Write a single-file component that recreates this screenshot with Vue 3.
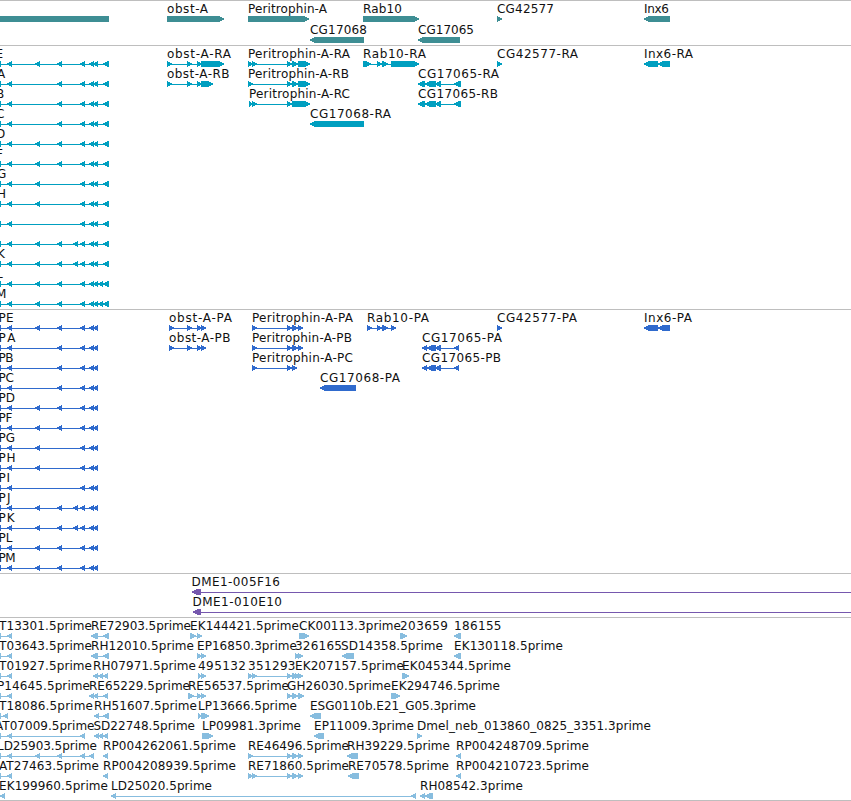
<template>
  <div class="browser">
    <section v-for="track in tracks" :key="track.id" class="track" :class="track.id">
      <svg class="canvas" width="851" :height="track.height" :viewBox="`0 0 851 ${track.height}`">
        <g
          v-for="(item, i) in track.items"
          :key="i"
          :transform="`translate(0 ${item.row * track.pitch})`"
        >
          <path class="shape" :d="shapePath(item)" />
          <text
            v-if="item.name"
            class="label"
            :x="item.x"
            y="12"
            :textLength="item.end - item.x"
            lengthAdjust="spacing"
          >{{ item.name }}</text>
        </g>
      </svg>
    </section>
  </div>
</template>

<script setup>
const TOP = 15;
const HEAD = 5;

// strand: 1 forward, -1 reverse, 0 plain bar
function feature(row, strand, name, x, end, exons) {
  return { row, strand, name, x, end, exons };
}

function exonPath([from, to], strand) {
  const bottom = TOP + 6;
  if (strand === 0 || to - from < 2) {
    return `M${from} ${TOP}H${to}V${bottom}H${from}Z`;
  }
  const head = Math.min(HEAD, to - from);
  if (strand > 0) {
    return `M${from} ${TOP}H${to - head}L${to} ${TOP + 2.5}V${TOP + 3.5}L${to - head} ${bottom}H${from}Z`;
  }
  return `M${from + head} ${TOP}H${to}V${bottom}H${from + head}L${from} ${TOP + 3.5}V${TOP + 2.5}Z`;
}

function shapePath(item) {
  const first = item.exons[0][0];
  const last = item.exons[item.exons.length - 1][1];
  const line = `M${first} ${TOP + 3}H${last}V${TOP + 4}H${first}Z`;
  return line + item.exons.map((exon) => exonPath(exon, item.strand)).join('');
}

const e0 = [0, 1];
const e7 = [7, 12];
const e35 = [35, 40];
const e57 = [57, 62];
const e73 = [73, 78];
const e80 = [80, 85];
const tail = [[89, 94], [93, 98]];

const variants = [
  [e0, e7, e35, e57, e80],
  [e0, e7, e57, e80],
  [e0, e7, e57, e80],
  [e0, e7, e57, e80],
  [e0, e7, e35, e57, e80],
  [e0, e7, e35, e57, e80],
  [e0, e7, e35, e80],
  [e0, e7, e35, e80],
  [e0, e7, e80],
  [e0, e7, e35, e57, e73, e80],
  [e0, e7, e35, e57, e73, e80],
  [e0, e7, e35, e57, e80],
  [e0, e7, e35, e57, e80],
];

const transcriptNames = [
  ['E', -4.5, 2.5], ['A', -3, 5.5], ['B', -4, 4], ['C', -4, 5], ['D', -4, 6],
  ['F', -4, 2.5], ['G', -3, 6], ['H', -3, 6], ['', 0, 0], ['', 0, 0],
  ['K', -3, 5], ['L', -4, 3], ['M', -4, 6.5],
];
const proteinNames = [
  ['PE', 13.5], ['PA', 15.5], ['PB', 13.5], ['PC', 14], ['PD', 15], ['PF', 12.5], ['PG', 15],
  ['PH', 15.5], ['PI', 10], ['PJ', 10.5], ['PK', 14.5], ['PL', 12.5], ['PM', 15.5],
];

const leftTranscripts = variants.map((exons, i) => {
  const end = i > 10 ? [[98, 103], [103, 109]] : [[103, 109]];
  const [name, x, to] = transcriptNames[i];
  return feature(i, -1, name, x, to, [...exons, ...tail, ...end]);
});
const leftProteins = variants.map((exons, i) =>
  feature(i, -1, proteinNames[i][0], -1.5, proteinNames[i][1], [...exons, ...tail])
);

const per3 = [[287, 292], [292, 298], [298, 303]];

const tracks = [
  {
    id: 'genes',
    height: 44,
    pitch: 21,
    items: [
      feature(0, 0, '', 0, 0, [[0, 109]]),
      feature(0, 1, 'obst-A', 167, 208, [[167, 224]]),
      feature(0, 1, 'Peritrophin-A', 248, 327, [[248, 309]]),
      feature(0, 1, 'Rab10', 363, 402, [[363, 419]]),
      feature(0, 1, 'CG42577', 497, 554, [[497, 502]]),
      feature(0, -1, 'Inx6', 644, 669, [[644, 670]]),
      feature(1, -1, 'CG17068', 310, 367, [[310, 364]]),
      feature(1, -1, 'CG17065', 418, 474, [[418, 460]]),
    ],
  },
  {
    id: 'transcripts',
    height: 263,
    pitch: 20,
    items: [
      ...leftTranscripts,
      feature(0, 1, 'obst-A-RA', 167, 231, [[167, 172], [187, 192], [197, 202], [201, 224]]),
      feature(1, 1, 'obst-A-RB', 167, 229.5, [[167, 172], [187, 192], [197, 202], [201, 213]]),
      feature(0, 1, 'Peritrophin-A-RA', 248, 350, [[248, 253], [252, 257], [287, 292], [292, 298], [298, 310]]),
      feature(1, 1, 'Peritrophin-A-RB', 248, 349, [[248, 253], [287, 292], [292, 298], [298, 310]]),
      feature(2, 1, 'Peritrophin-A-RC', 249, 350, [[249, 253], [252, 257], [287, 292], [292, 310]]),
      feature(3, -1, 'CG17068-RA', 310, 391, [[310, 364]]),
      feature(0, 1, 'Rab10-RA', 363, 426, [[363, 371], [377, 382], [382, 388], [391, 419]]),
      feature(1, -1, 'CG17065-RA', 418, 499, [[418, 425], [425, 436], [435, 441], [454, 461]]),
      feature(2, -1, 'CG17065-RB', 418, 498, [[418, 425], [425, 436], [435, 441], [454, 461]]),
      feature(0, 1, 'CG42577-RA', 497, 578, [[497, 502]]),
      feature(0, -1, 'Inx6-RA', 644, 693, [[644, 658], [658, 670]]),
    ],
  },
  {
    id: 'proteins',
    height: 263,
    pitch: 20,
    items: [
      ...leftProteins,
      feature(0, 1, 'obst-A-PA', 169, 232, [[169, 174], [187, 192], [197, 202], [201, 206]]),
      feature(1, 1, 'obst-A-PB', 169, 230.5, [[169, 174], [187, 192], [197, 202], [201, 206]]),
      feature(0, 1, 'Peritrophin-A-PA', 252, 353, [[252, 257], ...per3]),
      feature(1, 1, 'Peritrophin-A-PB', 252, 352, [[252, 257], ...per3]),
      feature(2, 1, 'Peritrophin-A-PC', 252, 353, [[252, 257], [287, 292], [292, 297]]),
      feature(3, -1, 'CG17068-PA', 320, 400, [[320, 356]]),
      feature(0, 1, 'Rab10-PA', 367, 429, [[367, 372], [377, 382], [382, 388], [391, 396]]),
      feature(1, -1, 'CG17065-PA', 422, 502, [[422, 427], [427, 436], [435, 441], [454, 459]]),
      feature(2, -1, 'CG17065-PB', 422, 501, [[422, 427], [427, 436], [435, 441], [454, 459]]),
      feature(0, 1, 'CG42577-PA', 497, 577, [[497, 502]]),
      feature(0, -1, 'Inx6-PA', 644, 692, [[644, 658], [658, 670]]),
    ],
  },
  {
    id: 'oligos',
    height: 43,
    pitch: 20,
    items: [
      feature(0, -1, 'DME1-005F16', 191.5, 280, [[192, 201], [851, 852]]),
      feature(1, -1, 'DME1-010E10', 192.5, 282, [[193, 201], [851, 852]]),
    ],
  },
  {
    id: 'ests',
    height: 182,
    pitch: 20,
    items: [
      feature(0, -1, 'T13301.5prime', -1, 92, [e0, e7]),
      feature(0, -1, 'RE72903.5prime', 91, 191, [[91, 98], [103, 109]]),
      feature(0, 1, 'EK144421.5prime', 190, 299, [[190, 196], [197, 202]]),
      feature(0, 1, 'CK00113.3prime', 299, 401, [[299, 309]]),
      feature(0, 1, '203659', 400, 448, [[400, 407]]),
      feature(0, -1, '186155', 454, 501.5, [[454, 461]]),

      feature(1, -1, 'T03643.5prime', -1, 92, [e0, e7]),
      feature(1, -1, 'RH12010.5prime', 91, 194, [[91, 98], [103, 109]]),
      feature(1, 1, 'EP16850.3prime', 197, 297, [[197, 202], [201, 206]]),
      feature(1, 1, '326165', 295, 342, [[295, 300], [298, 303]]),
      feature(1, -1, 'SD14358.5prime', 341, 443, [[342, 354]]),
      feature(1, -1, 'EK130118.5prime', 454, 563, [[454, 461]]),

      feature(2, -1, 'T01927.5prime', -1, 92, [e0, e7]),
      feature(2, -1, 'RH07971.5prime', 93, 196, [[93, 98], [98, 103], [103, 108]]),
      feature(2, 1, '495132', 198, 246, [[198, 202], [201, 206]]),
      feature(2, 1, '351293', 248, 295.5, [[248, 253], [252, 257], ...per3]),
      feature(2, 1, 'EK207157.5prime', 295, 404, [[295, 300], [298, 303]]),
      feature(2, 1, 'EK045344.5prime', 402, 511, [[402, 409]]),

      feature(3, -1, 'P14645.5prime', -3, 90, [e0, e7]),
      feature(3, -1, 'RE65229.5prime', 89, 190, [[89, 94], [93, 98], [103, 108]]),
      feature(3, 1, 'RE56537.5prime', 188, 289, [[188, 194], [197, 202], [201, 206]]),
      feature(3, 1, 'GH26030.5prime', 287, 391, [[287, 292], [292, 298], [298, 304]]),
      feature(3, 1, 'EK294746.5prime', 391, 500, [[391, 400]]),

      feature(4, -1, 'T18086.5prime', -1, 93, [e0, [3, 8]]),
      feature(4, -1, 'RH51607.5prime', 94, 197, [[94, 99], [103, 109]]),
      feature(4, 1, 'LP13666.5prime', 198, 297, [[198, 202], [201, 209]]),
      feature(4, -1, 'ESG0110b.E21_G05.3prime', 310, 476, [[310, 321]]),

      feature(5, -1, 'AT07009.5prime', -5, 94.5, [e0, e7, e80]),
      feature(5, -1, 'SD22748.5prime', 93.5, 195, [[94, 99], [98, 103], [103, 108]]),
      feature(5, 1, 'LP09981.3prime', 202, 301, [[202, 213]]),
      feature(5, -1, 'EP11009.3prime', 314, 414, [[314, 324]]),
      feature(5, 1, 'Dmel_neb_013860_0825_3351.3prime', 417, 651, [[417, 422]]),

      feature(6, -1, 'LD25903.5prime', -3, 97, [e0, e7, e35, e57, e80, [89, 94]]),
      feature(6, -1, 'RP004262061.5prime', 103, 236, [[103, 108]]),
      feature(6, 1, 'RE46496.5prime', 248, 349, [[248, 253], ...per3]),
      feature(6, -1, 'RH39229.5prime', 347, 450, [[347, 358]]),
      feature(6, -1, 'RP004248709.5prime', 456, 589, [[456, 461]]),

      feature(7, -1, 'AT27463.5prime', -1, 99, [e0, e7]),
      feature(7, -1, 'RP004208939.5prime', 103, 236, [[103, 108]]),
      feature(7, 1, 'RE71860.5prime', 248, 349, [[248, 253], [252, 257], ...per3]),
      feature(7, -1, 'RE70578.5prime', 348, 449, [[348, 359]]),
      feature(7, -1, 'RP004210723.5prime', 456, 589, [[456, 461]]),

      feature(8, -1, 'EK199960.5prime', -1, 108, [[0, 5]]),
      feature(8, -1, 'LD25020.5prime', 111, 212, [[111, 116], [411, 416]]),
      feature(8, -1, 'RH08542.3prime', 420, 523, [[420, 425], [425, 433]]),
    ],
  },
];
</script>

<style>
body {
  margin: 0;
  background: #fff;
}
</style>

<style scoped>
.browser {
  width: 851px;
  height: 801px;
  box-sizing: border-box;
  overflow: hidden;
  border-bottom: 1px solid #bebebe;
}

.track {
  border-top: 1px solid #bebebe;
}

.canvas {
  display: block;
}

.shape {
  shape-rendering: crispEdges;
}

.label {
  font-family: "DejaVu Sans", sans-serif;
  font-size: 12px;
  fill: #111;
}

.genes .shape {
  fill: #3e8e94;
}

.transcripts .shape {
  fill: #009fc0;
}

.proteins .shape {
  fill: #2f6acd;
}

.oligos .shape {
  fill: #7658ae;
}

.ests .shape {
  fill: #87bddf;
}
</style>
